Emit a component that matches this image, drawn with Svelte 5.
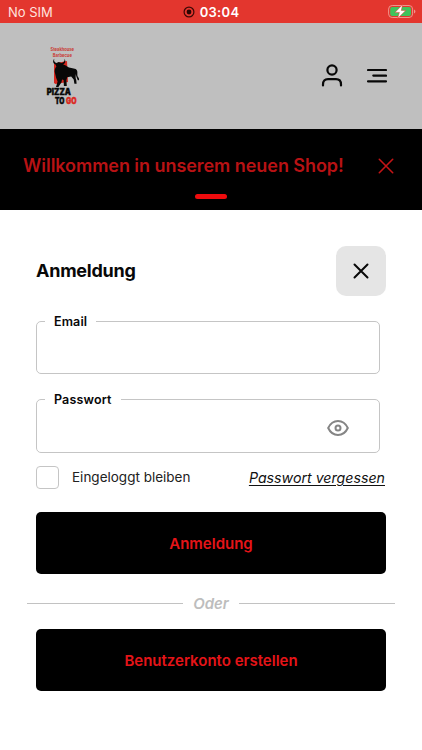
<script lang="ts">
  let email = $state('');
  let password = $state('');
  let showPassword = $state(false);
  let stayLoggedIn = $state(false);
</script>

<div class="screen">
  <div class="status">
    <span class="status__carrier">No SIM</span>
    <span class="status__time">
      <svg width="12" height="12" viewBox="0 0 12 12" aria-hidden="true">
        <circle cx="6" cy="6" r="4.9" fill="none" stroke="#3d0805" stroke-width="1.2" />
        <circle cx="6" cy="6" r="2.4" fill="#2b0503" />
      </svg>
      <span>03:04</span>
    </span>
    <svg class="status__battery" width="28" height="15" viewBox="0 0 28 15" aria-hidden="true">
      <rect x="0.6" y="1.5" width="24" height="12" rx="3.6" fill="none" stroke="#f0958c" />
      <rect x="2.2" y="3.1" width="20.8" height="8.8" rx="2" fill="#3fc35b" />
      <path d="M26 5.5v4q1.4-.6 1.4-2T26 5.5z" fill="#f0958c" />
      <path d="M14.6.6 7 8.4h4.4l-1.8 6 8.2-8h-4.500z" fill="#fff" stroke="#e3362e" stroke-width="0.5" />
    </svg>
  </div>

  <header class="header">
    <svg class="logo" width="40" height="64" viewBox="0 0 40 64" role="img" aria-label="Pizza to go">
      <g class="logo__small">
        <text x="7.5" y="8.3" textLength="23.5" lengthAdjust="spacingAndGlyphs">Steakhouse</text>
        <text x="9.8" y="14" textLength="19" lengthAdjust="spacingAndGlyphs">Barbecue</text>
      </g>
      <path d="M11 20.500 24 18l1 21-12.500 2-1.500-1z" fill="#d5271f" />
      <path
        transform="translate(-1 1.200)"
        d="M12.3 14.6c-.8 2.5.4 3.7 2.2 4.1l2.3-.8 2.7.8c2.3-.4 3.5-1.7 3-4.1 1.7 2.7.6 4.7-1.3 5.6 1.9.3 3.3 1.6 4.8 2.6 2.5 1.5 6.700.8 8.500 2.700 1.600 1.600.4 4.600 1.200 6.800.5 1.300 1.800 1.900 1.300 3.400-.3.8-1.300.5-1.500-.4-.5-2-1.500-2.900-1.600-5.500-.4 2.700-.5 4.200.4 6.200l.3 3.500h-2.200l-.7-4.200-2.500-3-4 .8-.8 3 .4 5.800h-2.900l-.3-6.200-1.500-.5-.6 2.800-3.100 4.800H14l1.600-5.500-1.500-3.700-1-4.200c-1-3-.3-5.400 1.300-7.200l-.9-2c-2.600-.8-3.100-3.400-1.200-5.600z"
        fill="#080808"
      />
      <g class="logo__name">
        <text x="3.8" y="52.3" textLength="24" lengthAdjust="spacingAndGlyphs">PIZZA</text>
        <text x="12" y="60.5" textLength="9.5" lengthAdjust="spacingAndGlyphs">TO</text>
        <text class="logo__go" x="23" y="60.5" textLength="10.5" lengthAdjust="spacingAndGlyphs">GO</text>
      </g>
    </svg>
    <div class="header__actions">
      <button type="button" aria-label="Konto">
        <svg width="22" height="24" viewBox="0 0 22 24">
          <circle cx="11" cy="6" r="4.6" />
          <path d="M2 21.5v-1q0-5.300 5-5.300h8q5 0 5 5.300v1" />
        </svg>
      </button>
      <button type="button" aria-label="Menü">
        <svg width="20" height="24" viewBox="0 0 20 24">
          <path d="M1 6h18M6.300 11.600H19M1 17.300h18" />
        </svg>
      </button>
    </div>
  </header>

  <section class="banner">
    <p>Willkommen in unserem neuen Shop!</p>
    <button type="button" aria-label="Hinweis ausblenden">
      <svg width="16" height="16" viewBox="0 0 16 16"><path d="m1.300 1.300 13.400 13.400M14.700 1.300 1.300 14.700" /></svg>
    </button>
    <span class="banner__dot"></span>
  </section>

  <main class="login">
    <div class="login__head">
      <h1>Anmeldung</h1>
      <button class="login__close" type="button" aria-label="Dialog beenden">
        <svg width="16" height="16" viewBox="0 0 16 16"><path d="m1.500 1.500 13 13M14.500 1.500l-13 13" /></svg>
      </button>
    </div>

    <form onsubmit={(e) => e.preventDefault()}>
      <fieldset class="field">
        <legend>Email</legend>
        <input type="email" aria-label="Email" bind:value={email} />
      </fieldset>

      <fieldset class="field field--password">
        <legend>Passwort</legend>
        <input type={showPassword ? 'text' : 'password'} aria-label="Passwort" bind:value={password} />
        <button type="button" aria-label="Passwort anzeigen" onclick={() => (showPassword = !showPassword)}>
          <svg width="22" height="18" viewBox="0 0 22 18">
            <path d="M1.200 9C3.300 4.500 6.800 2 11 2s7.700 2.500 9.800 7c-2.100 4.500-5.600 7-9.800 7S3.300 13.500 1.200 9z" />
            <circle cx="11" cy="9" r="2.500" />
          </svg>
        </button>
      </fieldset>

      <div class="options">
        <label>
          <input type="checkbox" bind:checked={stayLoggedIn} />
          <span>Eingeloggt bleiben</span>
        </label>
        <a href="#forgot">Passwort vergessen</a>
      </div>

      <button class="button" type="submit">Anmeldung</button>
    </form>

    <div class="divider"><span>Oder</span></div>

    <button class="button button--register" type="button">Benutzerkonto erstellen</button>
  </main>
</div>

<style>
  :global(body) {
    background: #fff;
  }

  .screen {
    height: 750px;
    overflow: hidden;
    font-family: Inter, 'Liberation Sans', sans-serif;
    color: #080808;
  }

  .screen * {
    box-sizing: border-box;
  }

  button {
    display: flex;
    align-items: center;
    justify-content: center;
    padding: 0;
    border: 0;
    background: none;
    font: inherit;
    cursor: pointer;
  }

  button svg {
    display: block;
    fill: none;
    stroke: currentColor;
    stroke-width: 2;
    stroke-linecap: round;
  }

  .status {
    display: grid;
    grid-template-columns: 1fr auto 1fr;
    align-items: center;
    height: 23px;
    padding: 0 6px 0 8px;
    background: #e3362e;
    color: #fff;
    font-size: 13px;
  }

  .status__carrier {
    color: #ffe2df;
  }

  .status__time {
    display: flex;
    align-items: center;
    gap: 5px;
    margin-left: -2px;
    font-weight: 600;
    letter-spacing: 0.3px;
  }

  .status__battery {
    justify-self: end;
  }

  .header {
    display: flex;
    justify-content: space-between;
    height: 106px;
    padding: 20px 35px 0 43px;
    background: #bfbfbf;
  }

  .logo__small {
    fill: #c93832;
    font-size: 4.7px;
    font-weight: 700;
  }

  .logo__name {
    fill: #080808;
    stroke: #080808;
    stroke-width: 0.4;
    font-size: 8.6px;
    font-weight: 900;
  }

  .logo__go {
    fill: #db2922;
    stroke: #db2922;
  }

  .header__actions {
    display: flex;
    align-items: flex-start;
    gap: 24px;
    padding-top: 21px;
  }

  .header__actions button {
    color: #080808;
  }

  .header__actions svg {
    stroke-width: 2.2;
  }

  .banner {
    position: relative;
    display: flex;
    justify-content: space-between;
    height: 81px;
    padding: 0 28px 0 23px;
    background: #000;
    color: #b81214;
  }

  .banner p {
    margin: 26px 0 0;
    font-size: 18px;
    line-height: 22px;
    font-weight: 600;
    letter-spacing: -0.05px;
    white-space: nowrap;
  }

  .banner button {
    align-self: flex-start;
    margin-top: 29px;
    color: #c51416;
  }

  .banner button svg {
    stroke-width: 1.6;
  }

  .banner__dot {
    position: absolute;
    left: 50%;
    bottom: 11px;
    width: 32px;
    height: 5px;
    border-radius: 3px;
    background: #ee0b0d;
    transform: translateX(-50%);
  }

  .login {
    padding: 36px 36px 0;
  }

  .login__head {
    display: flex;
    align-items: center;
    justify-content: space-between;
    height: 50px;
  }

  h1 {
    margin: 0;
    font-size: 18px;
    line-height: 22px;
    font-weight: 700;
    letter-spacing: -0.25px;
  }

  .login__close {
    width: 50px;
    height: 50px;
    border-radius: 10px;
    background: #e5e5e5;
    color: #080808;
  }

  .field {
    display: flex;
    width: 344px;
    height: 60px;
    min-width: 0;
    margin: 18px 0 0;
    padding: 0 30px 0 8px;
    border: 1px solid #c5c5c5;
    border-radius: 5px;
  }

  .field legend {
    padding: 0 9px;
    font-size: 12.5px;
    line-height: 15px;
    font-weight: 600;
    letter-spacing: 0.15px;
  }

  .field input {
    flex: 1;
    min-width: 0;
    border: 0;
    outline: 0;
    background: none;
    font: inherit;
  }

  .field--password {
    height: 61px;
  }

  .field--password button {
    padding-bottom: 4px;
    color: #858585;
  }

  .options {
    display: flex;
    align-items: center;
    justify-content: space-between;
    height: 23px;
    margin-top: 13px;
  }

  .options label {
    display: flex;
    align-items: center;
    gap: 13px;
    color: #222;
    font-size: 13.5px;
  }

  .options label span {
    padding-bottom: 2px;
  }

  .options input {
    appearance: none;
    width: 23px;
    height: 23px;
    margin: 0;
    border: 1px solid #c5c5c5;
    border-radius: 4px;
  }

  .options a {
    margin-right: 1px;
    color: #111;
    font-size: 14.2px;
    font-style: italic;
    text-underline-offset: 2px;
  }

  .button {
    width: 350px;
    height: 62px;
    margin-top: 23px;
    border-radius: 5px;
    background: #000;
    color: #e51418;
    font-size: 15px;
    font-weight: 600;
  }

  .divider {
    display: flex;
    align-items: center;
    gap: 10px;
    height: 18px;
    margin: 20px -9px 0;
    color: #bdbdbd;
    font-size: 15px;
    font-style: italic;
    font-weight: 600;
  }

  .divider::before,
  .divider::after {
    content: '';
    flex: 1;
    height: 1px;
    background: #c2c2c2;
  }

  .button--register {
    margin-top: 17px;
  }
</style>
